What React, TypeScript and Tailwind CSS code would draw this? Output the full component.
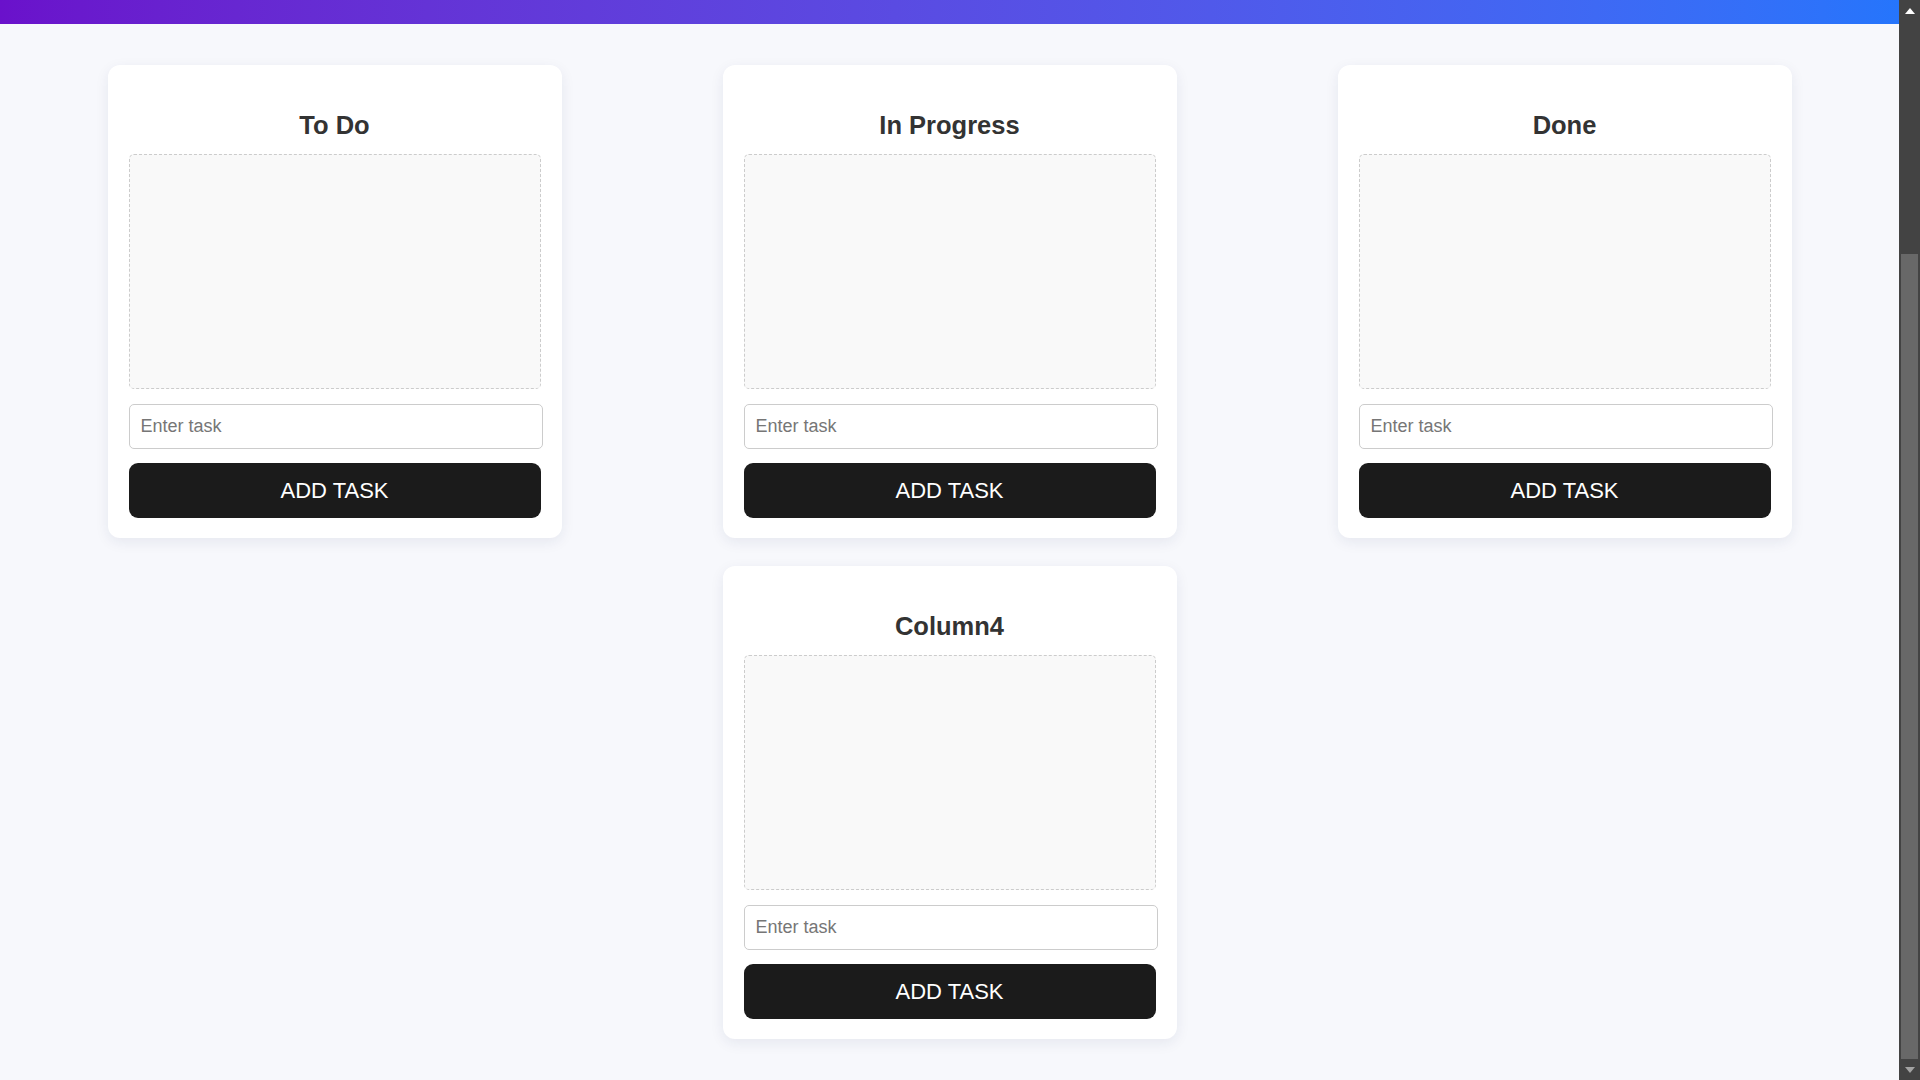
const columns = ['To Do', 'In Progress', 'Done', 'Column4']

function Column({ title }: { title: string }) {
  return (
    <div className="flex w-[454px] h-[473px] flex-col rounded-[12px] bg-white px-[21px] pt-[46px] pb-[20px] shadow-[0_4px_14px_rgba(30,40,90,0.08)]">
      <h2 className="text-center text-[25.5px] leading-[28px] font-bold text-[#333333]">{title}</h2>
      <div className="mt-[15px] h-[235px] rounded-[5px] border border-dashed border-[#cccccc] bg-[#f9f9f9]" />
      <input
        type="text"
        placeholder="Enter task"
        className="mt-[15px] h-[45px] w-[414px] rounded-[5px] border border-[#cccccc] bg-white px-[11px] text-[18px] text-[#333] outline-none placeholder:text-[#767676]"
      />
      <button className="mt-[14px] h-[55px] w-full rounded-[9px] bg-[#1b1b1b] text-[22px] text-white">
        ADD TASK
      </button>
    </div>
  )
}

function Scrollbar() {
  return (
    <div className="flex h-full w-[21px] shrink-0 flex-col bg-[#434343]">
      <div className="flex h-[21px] items-center justify-center">
        <svg width="10" height="6" viewBox="0 0 10 6">
          <path d="M5 0 L10 6 L0 6 Z" fill="#ffffff" />
        </svg>
      </div>
      <div className="flex flex-1 flex-col pt-[233px]">
        <div className="mx-[2px] flex-1 bg-[#686868]" />
      </div>
      <div className="flex h-[21px] items-center justify-center">
        <svg width="10" height="6" viewBox="0 0 10 6">
          <path d="M0 0 L10 0 L5 6 Z" fill="#a3a3a3" />
        </svg>
      </div>
    </div>
  )
}

export default function App() {
  return (
    <div className="flex h-screen w-full overflow-hidden font-['Liberation_Sans',Arial,sans-serif]">
      <div className="flex min-w-0 flex-1 flex-col bg-[#f7f8fc]">
        <div className="h-[24px] bg-gradient-to-r from-[#6a11cb] to-[#2575fc]" />
        <div className="flex flex-wrap justify-center gap-x-[161px] gap-y-[28px] pt-[41px]">
          {columns.map((c) => (
            <Column key={c} title={c} />
          ))}
        </div>
      </div>
      <Scrollbar />
    </div>
  )
}
